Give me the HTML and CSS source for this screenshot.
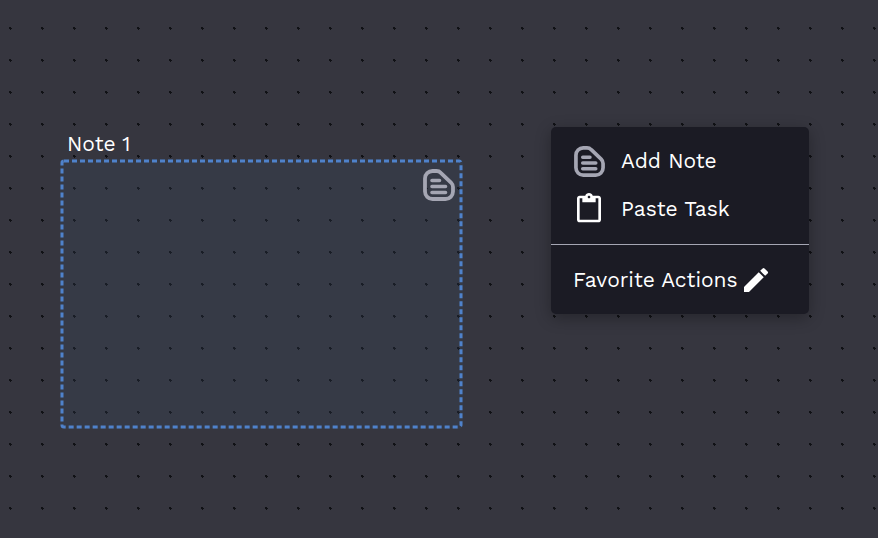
FILE: index.html
```html
<!DOCTYPE html>
<html lang="en">
<head>
<meta charset="utf-8">
<title>Board</title>
<link rel="stylesheet" href="styles.css">
</head>
<body>
<svg class="grid" aria-hidden="true">
  <defs>
    <pattern id="dots" width="32" height="32" patternUnits="userSpaceOnUse">
      <path d="M9 27h2v1h1v1h-1v1h-1v-1h-1z" fill="#101115" shape-rendering="crispEdges"/>
    </pattern>
    <symbol id="note-icon" viewBox="0 0 32 32">
      <path d="M9.500 2H13.500Q16 2 17.800 3.800L28 13.500Q30 15.500 30 18V22.500A7.500 7.500 0 0 1 22.500 30H9.500A7.500 7.500 0 0 1 2 22.500V9.500A7.500 7.500 0 0 1 9.500 2Z" fill="none" stroke="currentColor" stroke-width="3.800"/>
      <path d="M9 11.500H16.500M9 17.500H22.500M9 23.500H22.500" fill="none" stroke="currentColor" stroke-width="3.600" stroke-linecap="round"/>
    </symbol>
  </defs>
  <rect width="100%" height="100%" fill="url(#dots)"/>
</svg>
<main class="canvas">
  <section class="note" aria-labelledby="note-title">
    <h2 class="note-title" id="note-title">Note 1</h2>
    <div class="note-box">
      <svg class="note-outline" aria-hidden="true"><rect width="100%" height="100%" rx="2"/></svg>
      <svg class="icon muted" aria-hidden="true"><use href="#note-icon"/></svg>
    </div>
  </section>
  <div class="menu">
    <div class="menu-group">
      <button class="menu-item" type="button">
        <svg class="icon" viewBox="-1 0 32 32" aria-hidden="true"><use class="muted" href="#note-icon" x="0" y="1" width="31" height="31"/></svg>
        <span>Add Note</span>
      </button>
      <button class="menu-item" type="button">
        <svg class="icon" viewBox="0 0 24 24" aria-hidden="true"><path fill="currentColor" d="M19 2h-4.180C14.400.84 13.300 0 12 0S9.600.84 9.180 2H5c-1.100 0-2 .9-2 2v16c0 1.100.9 2 2 2h14c1.100 0 2-.9 2-2V4c0-1.100-.9-2-2-2zm-7 0c.55 0 1 .45 1 1s-.45 1-1 1-1-.45-1-1 .45-1 1-1zm7 18H5V4h2v3h10V4h2v16z"/></svg>
        <span>Paste Task</span>
      </button>
    </div>
    <button class="menu-item favorites" type="button">
      <span>Favorite Actions</span>
      <svg class="icon" viewBox="0 0 24 24" aria-hidden="true"><path fill="currentColor" d="M3 17.250V21h3.750L17.810 9.940l-3.750-3.750L3 17.250zM20.710 7.040a1 1 0 0 0 0-1.410l-2.340-2.340a1 1 0 0 0-1.410 0l-1.830 1.830 3.750 3.750 1.830-1.830z"/></svg>
    </button>
  </div>
</main>
</body>
</html>
```
FILE: styles.css
```css
* {
  box-sizing: border-box;
}

body {
  margin: 0;
  min-height: 100vh;
  background: #36363f;
  color: #fff;
  font: 21px/28px "Work Sans", Inter, sans-serif;
}

.grid {
  position: absolute;
  inset: 0;
  width: 100%;
  height: 100%;
}

.canvas {
  position: relative;
  min-height: 100vh;
  overflow: hidden;
}

.note {
  position: absolute;
  left: 60px;
  top: 130px;
}

.note-title {
  margin: 0;
  padding-left: 7px;
  font: inherit;
}

.note-box {
  display: flex;
  justify-content: flex-end;
  width: 403px;
  height: 270px;
  margin-top: 1px;
  padding: 10px 8px;
  border-radius: 4px;
  background: rgba(56, 72, 96, 0.24);
  position: relative;
}

.note-outline {
  position: absolute;
  inset: 2px;
  width: calc(100% - 4px);
  height: calc(100% - 4px);
  overflow: visible;
}

.note-outline rect {
  fill: none;
  stroke: #4f82cb;
  stroke-width: 3px;
  stroke-dasharray: 5 3;
}

.icon {
  flex: none;
  width: 32px;
  height: 32px;
}

.muted {
  color: #a5a6b3;
}

.menu {
  position: absolute;
  left: 551px;
  top: 127px;
  width: 258px;
  border-radius: 5px;
  background: #1b1b24;
  box-shadow: 0 4px 16px rgba(0, 0, 0, 0.3);
}

.menu-group {
  padding: 10px 0 11px;
  border-bottom: 1px solid #a5a6b3;
}

.menu-item {
  display: flex;
  align-items: center;
  gap: 16px;
  width: 100%;
  height: 48px;
  padding: 0 22px;
  border: 0;
  background: none;
  color: inherit;
  font: inherit;
  text-align: left;
  white-space: nowrap;
}

.favorites {
  gap: 2px;
  height: 69px;
}
```
